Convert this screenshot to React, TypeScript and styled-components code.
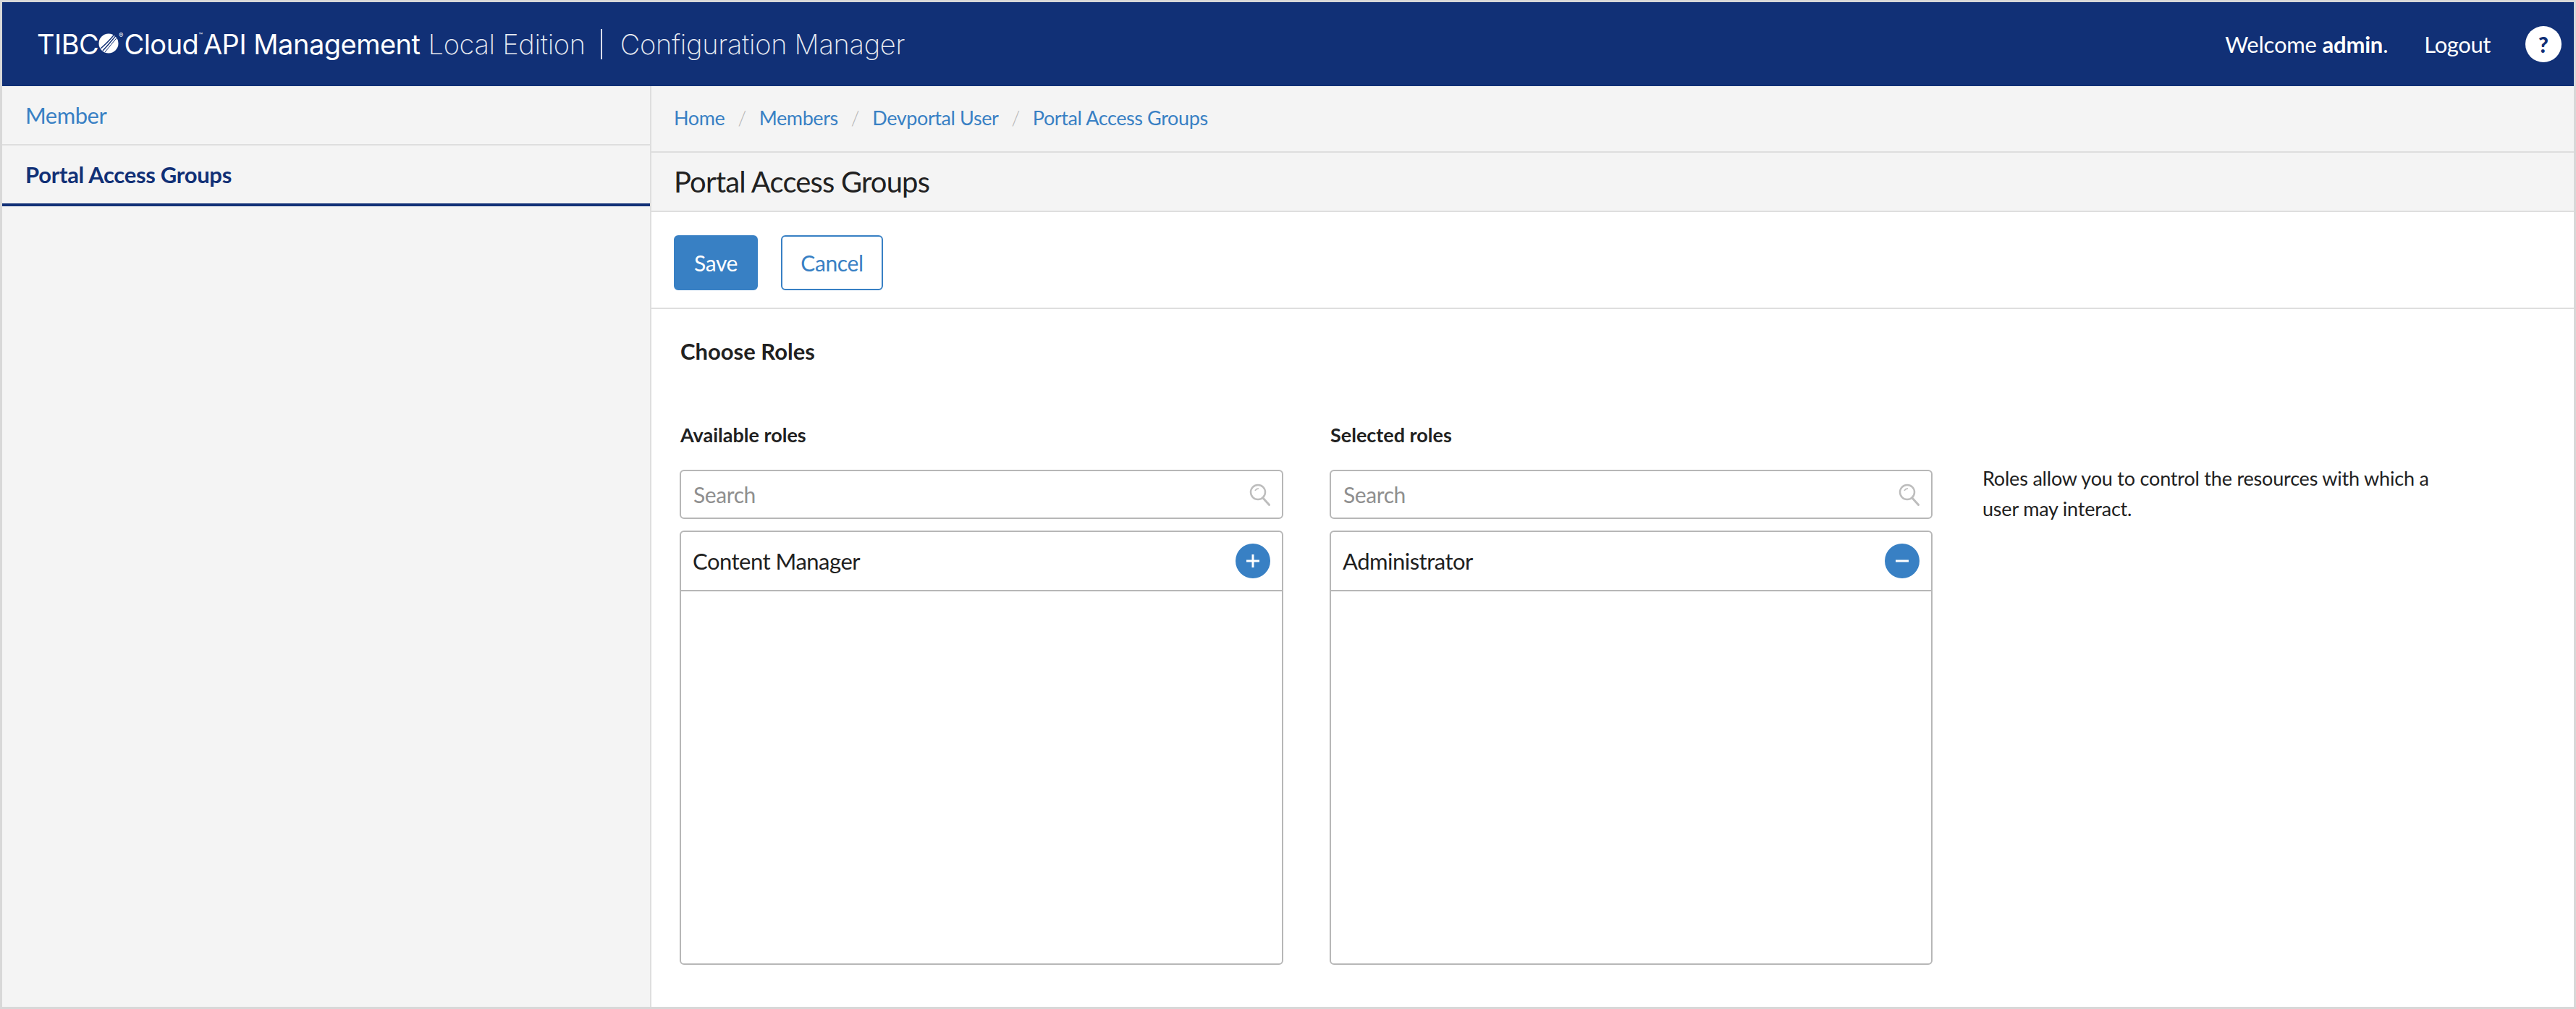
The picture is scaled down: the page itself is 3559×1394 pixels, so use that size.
import React from "react";
import styled, { createGlobalStyle } from "styled-components";

const GlobalStyle = createGlobalStyle`
  * {
    box-sizing: border-box;
  }

  body {
    margin: 0;
    font-family: "Lato", "Noto Sans", sans-serif;
    color: #212121;
    background: #ffffff;
  }
`;

const Page = styled.div`
  display: flex;
  flex-direction: column;
  height: 1394px;
  border: 3px solid #d8d8d8;
`;

const Header = styled.header`
  display: flex;
  align-items: center;
  justify-content: space-between;
  flex: 0 0 116px;
  padding: 0 17px 0 48px;
  background: #113076;
  color: #ffffff;
`;

const Brand = styled.div`
  display: flex;
  align-items: center;
  font-family: "Inter", sans-serif;
  font-size: 38px;
  letter-spacing: -0.5px;
  white-space: nowrap;
`;

const BrandStrong = styled.span`
  font-weight: 400;
`;

const BrandLight = styled.span<{ $flush?: boolean }>`
  font-weight: 200;
  margin-left: ${(p) => (p.$flush ? "0" : "11px")};
  letter-spacing: -0.3px;
  opacity: 0.9;
`;

const BrandMark = styled.svg`
  width: 28px;
  height: 28px;
  margin: 0 0 3px 0;
`;

const Sup = styled.sup`
  align-self: flex-start;
  font-size: 9px;
  line-height: 1;
  letter-spacing: 0;
  margin: 6px 1px 0 0;
`;

const BrandDivider = styled.span`
  width: 2px;
  height: 42px;
  margin: 0 25px 0 21px;
  background: #d8dcea;
`;

const UserArea = styled.div`
  display: flex;
  align-items: center;
  font-size: 31px;
  letter-spacing: -0.2px;
`;

const Logout = styled.a`
  margin: 0 48px 0 50px;
  color: #ffffff;
  letter-spacing: -0.4px;
`;

const HelpBadge = styled.span`
  display: flex;
  align-items: center;
  justify-content: center;
  width: 50px;
  height: 50px;
  border-radius: 50%;
  background: #ffffff;
  color: #113076;
  font-size: 30px;
  font-weight: 900;
`;

const Body = styled.div`
  display: flex;
  flex: 1;
  min-height: 0;
`;

const Sidebar = styled.nav`
  flex: 0 0 897px;
  background: #f4f4f4;
  border-right: 2px solid #dedede;
`;

const SideItem = styled.div<{ $active?: boolean }>`
  display: flex;
  align-items: center;
  height: ${(p) => (p.$active ? "84px" : "82px")};
  padding: 0 32px;
  font-size: 31px;
  font-weight: ${(p) => (p.$active ? 700 : 400)};
  letter-spacing: ${(p) => (p.$active ? "-0.3px" : "-0.5px")};
  color: ${(p) => (p.$active ? "#113076" : "#3880c4")};
  border-bottom: ${(p) => (p.$active ? "4px solid #113076" : "2px solid #dedede")};
`;

const Main = styled.main`
  flex: 1;
  min-width: 0;
  background: #ffffff;
`;

const Breadcrumbs = styled.div`
  display: flex;
  align-items: center;
  height: 92px;
  padding: 0 31px 3px;
  background: #f4f4f4;
  border-bottom: 2px solid #dedede;
  font-size: 27px;
  letter-spacing: -0.4px;
  color: #3880c4;
`;

const Slash = styled.span`
  margin: 0 18px;
  color: #b5b5b5;
  font-weight: 300;
`;

const TitleBar = styled.div`
  display: flex;
  align-items: center;
  height: 82px;
  padding: 0 31px;
  background: #f4f4f4;
  border-bottom: 2px solid #dedede;
`;

const Title = styled.h1`
  margin: 0;
  font-size: 40px;
  font-weight: 400;
  letter-spacing: -0.85px;
`;

const Toolbar = styled.div`
  display: flex;
  gap: 32px;
  height: 134px;
  padding: 32px 31px 0;
  border-bottom: 2px solid #dedede;
`;

const Button = styled.button<{ $primary?: boolean }>`
  height: 76px;
  width: ${(p) => (p.$primary ? "116px" : "141px")};
  padding: 0;
  border: 2px solid #3880c4;
  border-radius: 6px;
  background: ${(p) => (p.$primary ? "#3880c4" : "#ffffff")};
  color: ${(p) => (p.$primary ? "#ffffff" : "#3880c4")};
  font-family: inherit;
  font-size: 30px;
  letter-spacing: -0.4px;
`;

const Content = styled.section`
  padding: 38px 0 0 39px;
`;

const Heading = styled.h2`
  margin: 0 0 76px 1px;
  font-size: 31px;
  line-height: 40px;
  font-weight: 700;
  letter-spacing: 0;
`;

const Columns = styled.div`
  display: grid;
  grid-template-columns: 834px 833px 640px;
  column-gap: 64px;
`;

const Column = styled.div`
  display: flex;
  flex-direction: column;
`;

const ColumnLabel = styled.div`
  margin: 0 0 28px 1px;
  font-size: 27px;
  line-height: 40px;
  font-weight: 700;
  letter-spacing: 0;
`;

const SearchBox = styled.div`
  display: flex;
  align-items: center;
  justify-content: space-between;
  height: 68px;
  margin-bottom: 16px;
  padding: 0 16px 0 17px;
  border: 2px solid #b7b7b7;
  border-radius: 6px;
  font-size: 30px;
  letter-spacing: -0.4px;
  color: #8f8f8f;
`;

const SearchIcon = styled.svg`
  width: 29px;
  height: 31px;
`;

const RoleList = styled.div`
  height: 600px;
  border: 2px solid #b7b7b7;
  border-radius: 6px;
`;

const RoleRow = styled.div`
  display: flex;
  align-items: center;
  justify-content: space-between;
  height: 82px;
  padding: 0 16px 0 16px;
  border-bottom: 2px solid #b7b7b7;
  font-size: 31px;
  letter-spacing: -0.5px;
`;

const RoundButton = styled.span`
  display: flex;
  align-items: center;
  justify-content: center;
  width: 48px;
  height: 48px;
  border-radius: 50%;
  background: #3880c4;
`;

const RoundIcon = styled.svg`
  width: 20px;
  height: 20px;
`;

const HelpText = styled.p`
  width: 640px;
  margin: 59px 0 0 5px;
  font-size: 27px;
  line-height: 42px;
  letter-spacing: -0.2px;
`;

const Logo = () => (
  <BrandMark viewBox="0 0 28 28" aria-hidden="true">
    <circle cx="14" cy="14" r="13.5" fill="#ffffff" />
    <path d="M3 21C10 15 17 8 22 1.500" fill="none" stroke="#113076" strokeWidth="1.400" />
    <path d="M6 24C13 17 19 9 24.500 3" fill="none" stroke="#113076" strokeWidth="1.400" />
    <path d="M9 26C15 19 21 11 26 5.500" fill="none" stroke="#113076" strokeWidth="1" />
  </BrandMark>
);

const MagnifierIcon = () => (
  <SearchIcon viewBox="0 0 29 31" fill="none" stroke="#bdbdbd" strokeWidth="2.500" aria-hidden="true">
    <circle cx="12" cy="12" r="10" />
    <path d="M18.500 19.500L27.500 29.500" strokeLinecap="round" strokeWidth="3" />
    <path d="M8 10c1-2 3-3 5-3" strokeWidth="1.500" />
  </SearchIcon>
);

const RoleAction = ({ kind }: { kind: "add" | "remove" }) => (
  <RoundButton>
    <RoundIcon viewBox="0 0 20 20" stroke="#ffffff" strokeWidth="3" aria-hidden="true">
      <path d="M1 10H19" />
      {kind === "add" && <path d="M10 1V19" />}
    </RoundIcon>
  </RoundButton>
);

const RoleColumn = ({ label, role, kind }: { label: string; role: string; kind: "add" | "remove" }) => (
  <Column>
    <ColumnLabel>{label}</ColumnLabel>
    <SearchBox>
      Search
      <MagnifierIcon />
    </SearchBox>
    <RoleList>
      <RoleRow>
        {role}
        <RoleAction kind={kind} />
      </RoleRow>
    </RoleList>
  </Column>
);

const crumbs = ["Home", "Members", "Devportal User", "Portal Access Groups"];

const App: React.FC = () => (
  <>
    <GlobalStyle />
    <Page>
      <Header>
        <Brand>
          <BrandStrong>TIBC</BrandStrong>
          <Logo />
          <Sup>®</Sup>
          <BrandStrong>Cloud</BrandStrong>
          <Sup>™</Sup>
          <BrandStrong>API Management</BrandStrong>
          <BrandLight>Local Edition</BrandLight>
          <BrandDivider />
          <BrandLight $flush>Configuration Manager</BrandLight>
        </Brand>
        <UserArea>
          <span>
            Welcome <b>admin</b>.
          </span>
          <Logout>Logout</Logout>
          <HelpBadge>?</HelpBadge>
        </UserArea>
      </Header>
      <Body>
        <Sidebar>
          <SideItem>Member</SideItem>
          <SideItem $active>Portal Access Groups</SideItem>
        </Sidebar>
        <Main>
          <Breadcrumbs>
            {crumbs.map((crumb, i) => (
              <React.Fragment key={crumb}>
                {i > 0 && <Slash>/</Slash>}
                {crumb}
              </React.Fragment>
            ))}
          </Breadcrumbs>
          <TitleBar>
            <Title>Portal Access Groups</Title>
          </TitleBar>
          <Toolbar>
            <Button $primary>Save</Button>
            <Button>Cancel</Button>
          </Toolbar>
          <Content>
            <Heading>Choose Roles</Heading>
            <Columns>
              <RoleColumn label="Available roles" role="Content Manager" kind="add" />
              <RoleColumn label="Selected roles" role="Administrator" kind="remove" />
              <HelpText>Roles allow you to control the resources with which a user may interact.</HelpText>
            </Columns>
          </Content>
        </Main>
      </Body>
    </Page>
  </>
);

export default App;
